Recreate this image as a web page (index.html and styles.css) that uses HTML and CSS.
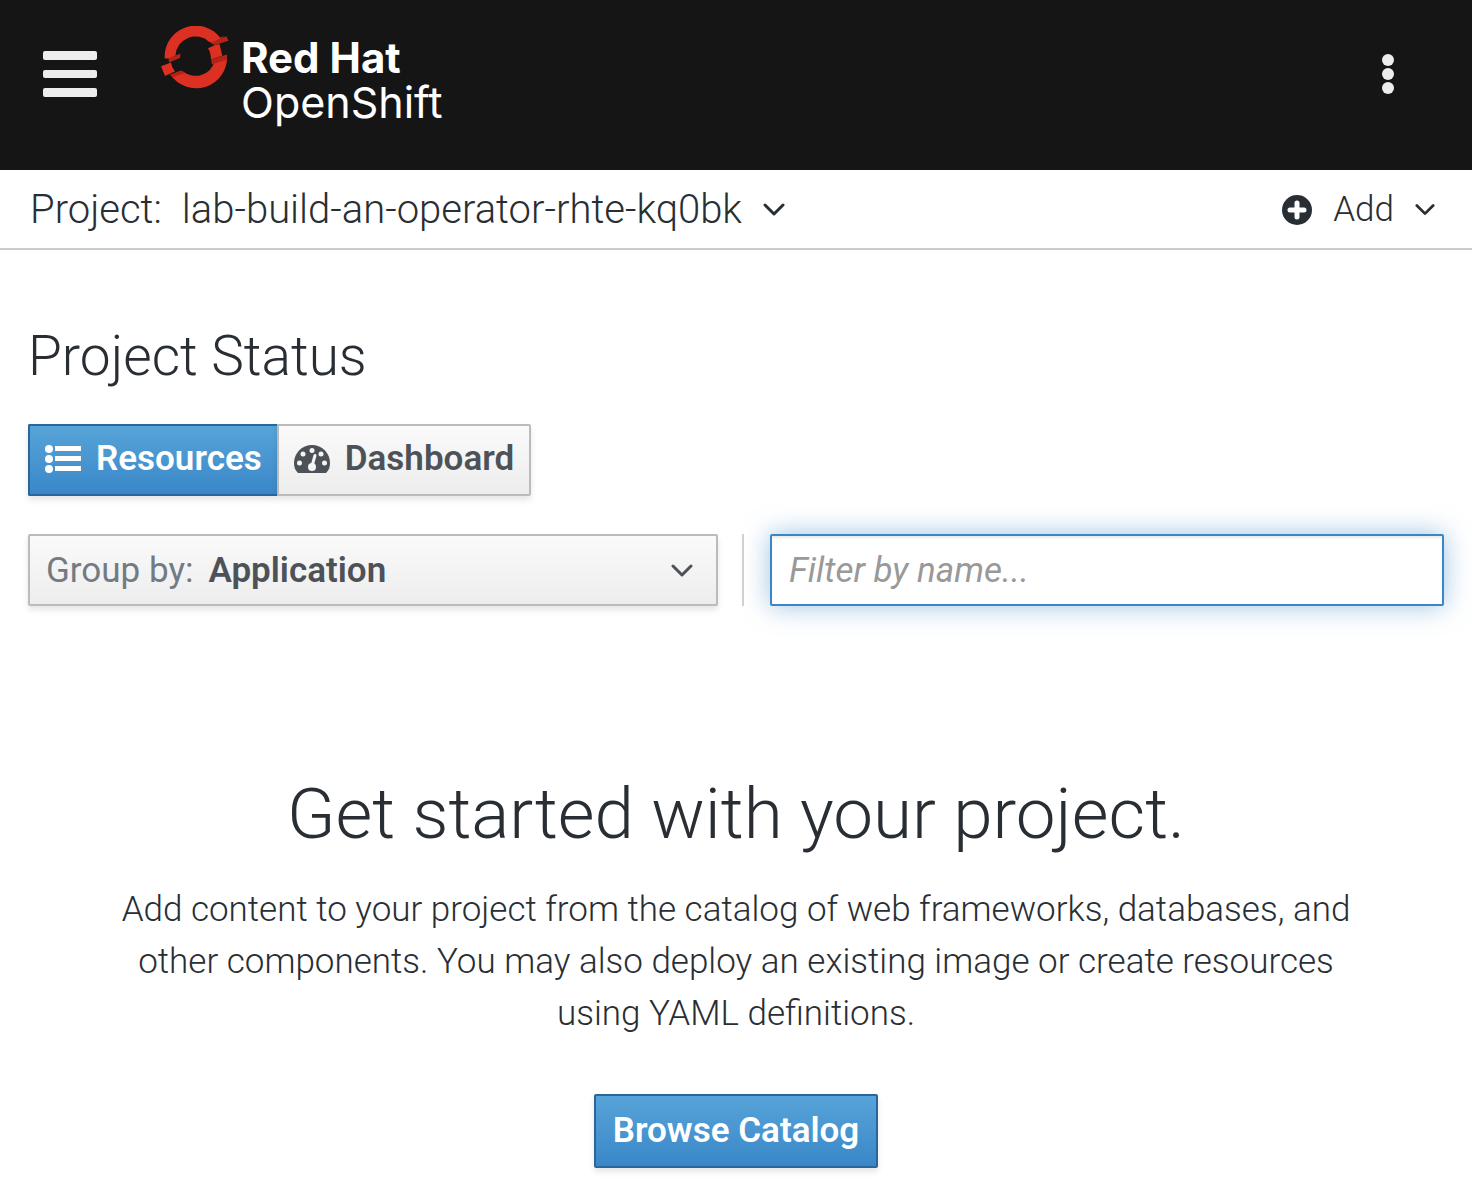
FILE: index.html
```html
<!DOCTYPE html>
<html lang="en">
<head>
<meta charset="utf-8">
<meta name="viewport" content="width=device-width">
<title>Project Status</title>
<link rel="stylesheet" href="styles.css">
</head>
<body>
<header class="masthead">
  <button class="icon-button nav-toggle" type="button" aria-label="Toggle navigation">
    <svg width="54" height="46" viewBox="0 0 54 46" fill="#ededed"><rect width="54" height="9" rx="2"/><rect y="19" width="54" height="8" rx="2"/><rect y="37" width="54" height="9" rx="2"/></svg>
  </button>
  <a class="brand" href="#" aria-label="Red Hat OpenShift">
    <svg class="brand-mark" width="68" height="64" viewBox="0 1 68 64">
      <g fill="#dc3022">
        <path d="M3.7 33.5A31 31 0 0 1 59 12.5L64 11L52 18L48.3 17A20 20 0 0 0 14.500 30.5L9 33.5Z"/>
        <path d="M47 23.3L54 20L58.5 19L61.3 30.7L50 34.5Q50 28 47 23.3Z"/>
        <path d="M0 41.3L10 37.5Q10.500 42 14 46.500L4 51Z"/>
        <path d="M9 50L19.700 46L22 46.500A20 20 0 0 0 53.500 37L66 30A31 31 0 0 1 9 49Z"/>
      </g>
      <g fill="#b52318"><path d="M49 18L65.500 11.300L67.500 15.700L54 20Z"/><path d="M50 34.500L66 29.500V34.500L51 39.500Z"/><path d="M7.500 33.500L19.500 28.500L19 33L8 37.500Z"/><path d="M9 50L19.700 45.500L24 48L12.500 52Z"/></g>
    </svg>
    <span class="brand-name"><strong>Red Hat</strong><span>OpenShift</span></span>
  </a>
  <button class="icon-button kebab" type="button" aria-label="More actions">
    <svg width="12" height="40" viewBox="0 0 12 40" fill="#ededed"><circle cx="6" cy="6" r="6"/><circle cx="6" cy="20" r="6"/><circle cx="6" cy="34" r="6"/></svg>
  </button>
</header>

<div class="project-bar">
  <div class="project-picker">
    <label for="project">Project:</label>
    <span class="select-wrap">
      <select id="project"><option>lab-build-an-operator-rhte-kq0bk</option></select>
      <svg class="chevron" width="22" height="14" viewBox="0 0 22 14"><path d="M2 2L11 11L20 2"/></svg>
    </span>
  </div>
  <button class="add-button" type="button">
    <svg width="30" height="30" viewBox="0 0 30 30"><circle cx="15" cy="15" r="15" fill="#292e34"/><path d="M15 8V22M8 15H22" stroke="#fff" stroke-width="5" stroke-linecap="round"/></svg>
    <span>Add</span>
    <svg class="chevron" width="20" height="14" viewBox="0 0 22 14"><path d="M2 2L11 11L20 2"/></svg>
  </button>
</div>

<main class="content">
  <h1 class="page-title">Project Status</h1>
  <div class="button-group">
    <button class="btn btn-primary" type="button" aria-pressed="true">
      <svg width="36" height="28" viewBox="0 0 36 28" fill="#fff"><circle cx="4" cy="4" r="4"/><circle cx="4" cy="14" r="4"/><circle cx="4" cy="24" r="4"/><path d="M10 1H36V6H10ZM10 11H36V16H10ZM10 21H36V26H10Z"/></svg>
      Resources
    </button>
    <button class="btn btn-default" type="button" aria-pressed="false">
      <svg width="36" height="28" viewBox="0 0 36 28"><path fill="#4d5258" d="M4 28C1 25 0 22 0 18C0 8 8 0 18 0S36 8 36 18C36 22 35 25 32 28Z"/><g fill="#f5f5f5"><circle cx="5.500" cy="18" r="2.500"/><circle cx="9" cy="9" r="2.500"/><circle cx="18" cy="5.500" r="2.500"/><circle cx="27" cy="9" r="2.500"/><circle cx="30.500" cy="18" r="2.500"/><circle cx="18" cy="22" r="4"/></g><path d="M18 21L21 10.500" stroke="#f5f5f5" stroke-width="3" stroke-linecap="round"/></svg>
      Dashboard
    </button>
  </div>

  <div class="toolbar">
    <div class="group-by">
      <label for="group">Group by:</label>
      <select id="group"><option>Application</option></select>
      <svg class="chevron" width="22" height="14" viewBox="0 0 22 14"><path d="M2 2L11 11L20 2"/></svg>
    </div>
    <div class="filter"><input class="filter-input" type="text" placeholder="Filter by name..." aria-label="Filter by name"></div>
  </div>

  <section class="empty-state">
    <h2>Get started with your project.</h2>
    <p>Add content to your project from the catalog of web frameworks, databases, and other components. You may also deploy an existing image or create resources using YAML definitions.</p>
    <button class="btn btn-primary" type="button">Browse Catalog</button>
  </section>
</main>
</body>
</html>
```
FILE: styles.css
```css
* { box-sizing: border-box; }
body {
  margin: 0;
  background: #fff;
  color: #292e34;
  font: 300 35px/52px Roboto, sans-serif;
}
button, select, input { font: inherit; color: inherit; }
button { cursor: pointer; }
svg { display: block; flex: none; }
h1, h2, p { margin: 0; }
h1, h2 { font-weight: 300; }

.masthead {
  display: flex;
  align-items: flex-start;
  height: 170px;
  padding: 26px 78px 0 43px;
  background: #151515;
}
.icon-button { padding: 0; border: 0; background: none; }
.nav-toggle { margin-top: 25px; }
.kebab { margin: 28px 0 0 auto; }
.brand {
  display: flex;
  gap: 12px;
  margin-left: 64px;
  color: #fff;
  text-decoration: none;
}
.brand-name {
  display: flex;
  flex-direction: column;
  padding-top: 9px;
  font: 400 43px/45px Inter, sans-serif;
}
.brand-name strong { font-size: 42px; font-weight: 700; }

.project-bar {
  display: flex;
  align-items: center;
  justify-content: space-between;
  height: 80px;
  padding: 2px 37px 0 30px;
  border-bottom: 2px solid #ccc;
}
.project-picker {
  display: flex;
  align-items: center;
  gap: 20px;
  font-size: 40px;
}
.select-wrap { position: relative; }
select {
  appearance: none;
  padding: 0;
  border: 0;
  background: none;
}
.select-wrap select { padding-right: 42px; }
.chevron {
  fill: none;
  stroke: currentColor;
  stroke-width: 3;
  stroke-linecap: round;
  stroke-linejoin: round;
}
.select-wrap .chevron {
  position: absolute;
  top: 50%;
  right: 0;
  margin-top: -7px;
  pointer-events: none;
}
.add-button {
  display: flex;
  align-items: center;
  gap: 21px;
  padding: 0;
  border: 0;
  background: none;
}

.content { padding: 70px 28px 16px; }
.page-title { font-size: 55px; line-height: 72px; }
.button-group { display: flex; margin-top: 32px; }
.btn {
  display: inline-flex;
  align-items: center;
  gap: 15px;
  height: 72px;
  padding: 0 15px 2px;
  border: 2px solid #bbb;
  border-radius: 2px;
  box-shadow: 0 4px 6px rgba(3, 3, 3, 0.1);
  font-weight: 600;
}
.btn-primary {
  border-color: #2b669a;
  background: linear-gradient(#57a4d9, #3a87c8);
  color: #fff;
}
.btn-default {
  background: linear-gradient(#fafafa, #ededed);
  color: #4d5258;
}
.button-group .btn:first-child { border-right: 0; border-radius: 2px 0 0 2px; }
.button-group .btn:last-child { border-radius: 0 2px 2px 0; }

.toolbar {
  display: grid;
  grid-template-columns: 690fr 702fr;
  gap: 24px;
  margin-top: 38px;
  font-weight: 400;
}
.group-by {
  position: relative;
  display: flex;
  align-items: center;
  gap: 15px;
  height: 72px;
  padding: 2px 16px 0;
  border: 2px solid #bbb;
  border-radius: 2px;
  background: linear-gradient(#fafafa, #ededed);
  box-shadow: 0 4px 6px rgba(3, 3, 3, 0.1);
  color: #4d5258;
}
.group-by label { color: #727b84; }
.group-by select { flex: 1; min-width: 0; font-weight: 600; }
.group-by .chevron {
  position: absolute;
  right: 23px;
  pointer-events: none;
}
.filter { padding-left: 26px; border-left: 2px solid #d1d1d1; }
.filter-input {
  display: block;
  width: 100%;
  height: 72px;
  padding: 0 17px;
  border: 2px solid #3a87c8;
  border-radius: 2px;
  outline: 0;
  background: #fff;
  box-shadow: inset 0 2px 2px rgba(3, 3, 3, 0.08), 0 0 26px rgba(58, 135, 200, 0.5);
}
.filter-input::placeholder { color: #999; font-style: italic; opacity: 1; }

.empty-state {
  max-width: 1260px;
  margin: 160px auto 0;
  text-align: center;
}
.empty-state h2 { font-size: 71px; line-height: 96px; }
.empty-state p { margin: 22px 0 54px; }
.empty-state .btn { height: 74px; padding: 0 17px; }
```
